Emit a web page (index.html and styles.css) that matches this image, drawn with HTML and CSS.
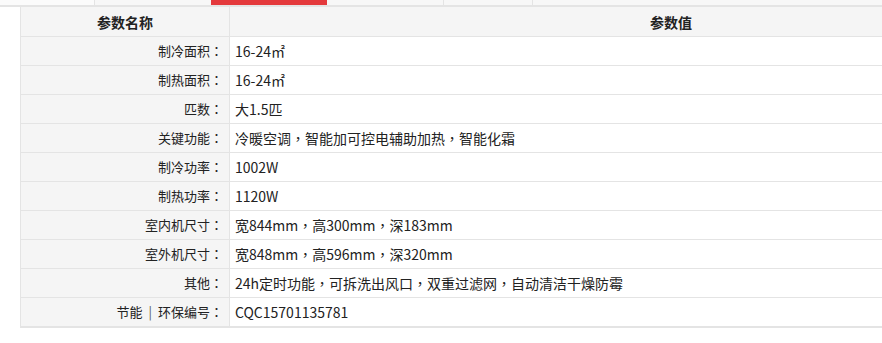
FILE: index.html
```html
<!DOCTYPE html>
<html lang="zh-CN">
<head>
<meta charset="utf-8">
<title>参数</title>
<link rel="stylesheet" href="styles.css">
</head>
<body>
<div class="tabs">
  <div class="tab t1"></div>
  <div class="tab t2"></div>
  <div class="tab t3 active"></div>
  <div class="tab t4"></div>
  <div class="tab t5"></div>
  <div class="tab t6"></div>
</div>
<table class="spec">
  <thead>
    <tr><th class="name">参数名称</th><th class="val">参数值</th></tr>
  </thead>
  <tbody>
    <tr><td class="label">制冷面积<span class="p" lang="zh-Hant">：</span></td><td class="value">16-24㎡</td></tr>
    <tr><td class="label">制热面积<span class="p" lang="zh-Hant">：</span></td><td class="value">16-24㎡</td></tr>
    <tr><td class="label">匹数<span class="p" lang="zh-Hant">：</span></td><td class="value">大1.5匹</td></tr>
    <tr><td class="label">关键功能<span class="p" lang="zh-Hant">：</span></td><td class="value">冷暖空调<span class="p" lang="zh-Hant">，</span>智能加可控电辅助加热<span class="p" lang="zh-Hant">，</span>智能化霜</td></tr>
    <tr><td class="label">制冷功率<span class="p" lang="zh-Hant">：</span></td><td class="value">1002W</td></tr>
    <tr><td class="label">制热功率<span class="p" lang="zh-Hant">：</span></td><td class="value">1120W</td></tr>
    <tr><td class="label">室内机尺寸<span class="p" lang="zh-Hant">：</span></td><td class="value">宽844mm<span class="p" lang="zh-Hant">，</span>高300mm<span class="p" lang="zh-Hant">，</span>深183mm</td></tr>
    <tr><td class="label">室外机尺寸<span class="p" lang="zh-Hant">：</span></td><td class="value">宽848mm<span class="p" lang="zh-Hant">，</span>高596mm<span class="p" lang="zh-Hant">，</span>深320mm</td></tr>
    <tr><td class="label">其他<span class="p" lang="zh-Hant">：</span></td><td class="value">24h定时功能<span class="p" lang="zh-Hant">，</span>可拆洗出风口<span class="p" lang="zh-Hant">，</span>双重过滤网<span class="p" lang="zh-Hant">，</span>自动清洁干燥防霉</td></tr>
    <tr><td class="label">节能<span class="sep">|</span>环保编号<span class="p" lang="zh-Hant">：</span></td><td class="value">CQC15701135781</td></tr>
  </tbody>
</table>
</body>
</html>
```
FILE: styles.css
```css
html, body {
  margin: 0;
  padding: 0;
  overflow: hidden;
  background: #fff;
}
body {
  font-family: "Microsoft YaHei", "Noto Sans CJK SC", "Noto Sans", sans-serif;
  color: #333;
}
.tabs {
  display: flex;
  height: 5px;
  background: #f7f7f7;
  border-bottom: 2px solid #e4e4e4;
}
.tab {
  border-right: 1px solid #e4e4e4;
  height: 5px;
}
.t1 { width: 94px; background: #fbfbfb; }
.t2 { width: 116px; border-right: 0; }
.t3 { width: 116px; }
.t4 { width: 116px; }
.t5 { width: 88px; }
.t6 { flex: 1; border-right: 0; }
.tab.active { background: #e4393c; border-right: 0; width: 116px; }

.spec {
  margin-left: 20px;
  width: 1093px;
  border-collapse: collapse;
  table-layout: fixed;
  border-left: 1px solid #e4e4e4;
  border-bottom: 2px solid #e4e4e4;
}
.spec th, .spec td {
  border-bottom: 1px solid #e4e4e4;
  border-right: 1px solid #e4e4e4;
  padding: 0;
}
.spec th {
  height: 29px;
  background: #f5f5f5;
  font-size: 14px;
  font-weight: bold;
  color: #222;
  text-align: center;
}
.spec th.name { width: 208px; }
.spec td {
  height: 28px;
  font-size: 13px;
  line-height: 28px;
  color: #222;
}
.spec td.label {
  background: #f5f5f5;
  text-align: right;
  padding-right: 6px;
}
.spec td.value {
  padding-left: 5px;
  font-size: 14px;
  white-space: nowrap;
}
.p {
  font-family: "Noto Sans CJK TC", "Noto Sans CJK SC", sans-serif;
}
.sep {
  display: inline-block;
  margin: 0 6px;
  color: #555;
}
```
